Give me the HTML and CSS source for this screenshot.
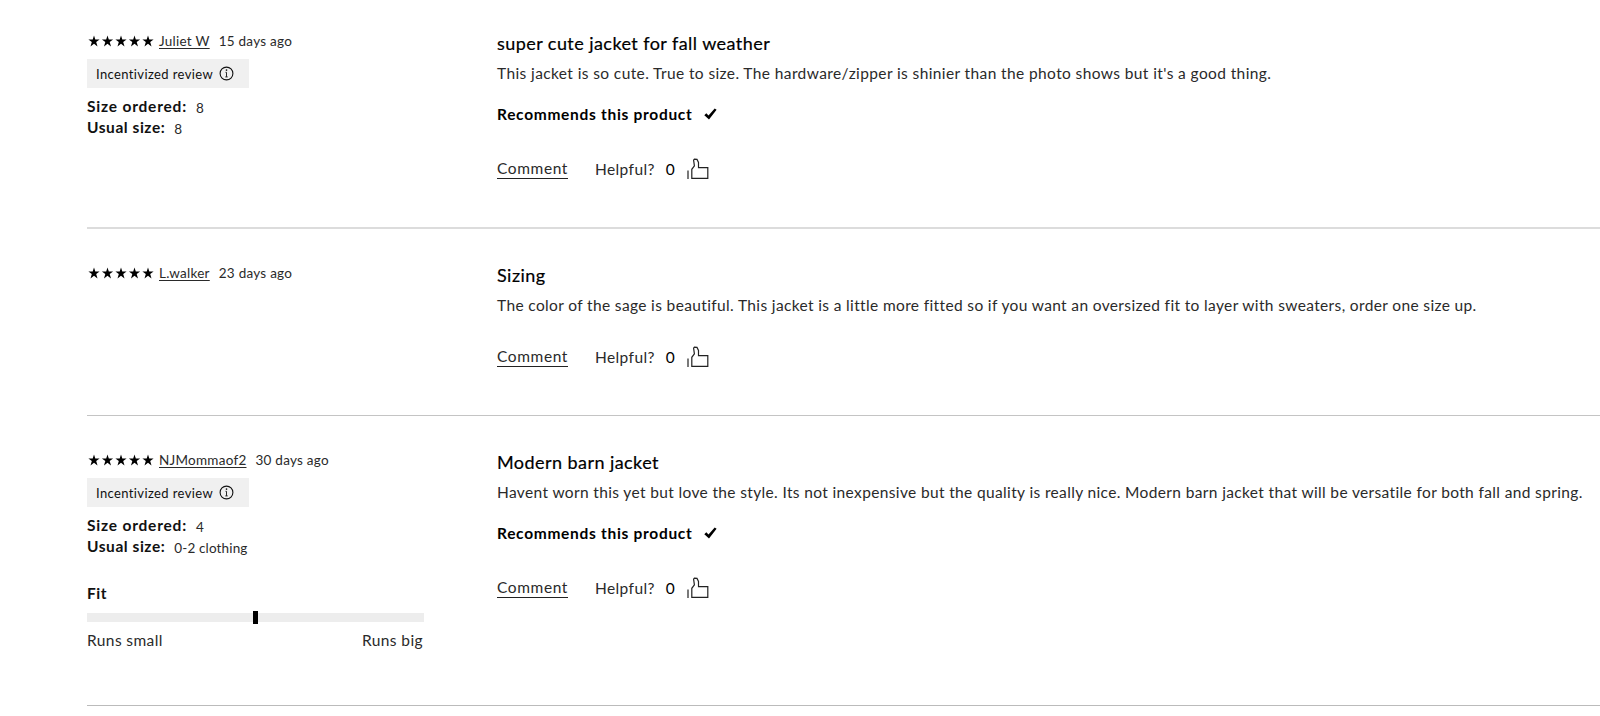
FILE: index.html
```html
<!DOCTYPE html>
<html lang="en">
<head>
  <meta charset="UTF-8">
  <title>Customer Reviews</title>
  <link rel="stylesheet" href="styles.css">
</head>
<body>

<!-- shared icons -->
<svg class="sprite" width="0" height="0">
  <symbol id="stars" viewBox="0 0 66 12">
    <path id="star" d="M6 0.4L7.3 4.5H11.6L8.2 7.1L9.5 11.4L6 8.8L2.5 11.4L3.8 7.1L0.4 4.5H4.7Z"/>
    <use href="#star" x="13.5"/>
    <use href="#star" x="27"/>
    <use href="#star" x="40.5"/>
    <use href="#star" x="54"/>
  </symbol>
  <symbol id="info" viewBox="0 0 15 15">
    <circle cx="7.5" cy="7.5" r="6.4" fill="none" stroke="#111" stroke-width="1.1"/>
    <path d="M6.5 6.3H7.5V10.8M6.3 10.9H8.7" fill="none" stroke="#111" stroke-width="0.9"/>
    <rect x="6.8" y="3.4" width="1.4" height="1.4"/>
  </symbol>
  <symbol id="check" viewBox="0 0 13 12">
    <path d="M0.3 7.2L2.3 5.2L4.5 7.4L10.7 0.4L12.6 1.7L5 11.6Z"/>
  </symbol>
  <symbol id="thumb" viewBox="0 0 22 22">
    <path d="M1 12.5V21M4.8 20.3V11.3L7.4 7.8L6.6 2.2L7.4 1.2L10 1.4L11.5 4.4V9.6H20.8V20.3Z" fill="none" stroke="#222" stroke-width="1.2"/>
  </symbol>
</svg>

<div class="reviews">
  <div class="review">
    <div class="author">
      <div class="byline">
        <svg class="stars"><use href="#stars"/></svg>
        <a class="name">Juliet W</a>
        <span class="date">15 days ago</span>
      </div>
      <div class="tag"><span>Incentivized review</span><svg class="info"><use href="#info"/></svg></div>
      <div class="detail"><b class="ordered">Size ordered:</b><span>8</span></div>
      <div class="detail"><b>Usual size:</b><span>8</span></div>
    </div>
    <div class="content">
      <h3>super cute jacket for fall weather</h3>
      <p>This jacket is so cute. True to size. The hardware/zipper is shinier than the photo shows but it's a good thing.</p>
      <div class="recommend"><b>Recommends this product</b><svg class="check"><use href="#check"/></svg></div>
      <div class="actions">
        <a class="comment">Comment</a>
        <span class="helpful">Helpful?</span>
        <span class="count">0</span>
        <svg class="thumb"><use href="#thumb"/></svg>
      </div>
    </div>
  </div>

  <div class="review short">
    <div class="author">
      <div class="byline">
        <svg class="stars"><use href="#stars"/></svg>
        <a class="name">L.walker</a>
        <span class="date">23 days ago</span>
      </div>
    </div>
    <div class="content">
      <h3>Sizing</h3>
      <p>The color of the sage is beautiful. This jacket is a little more fitted so if you want an oversized fit to layer with sweaters, order one size up.</p>
      <div class="actions">
        <a class="comment">Comment</a>
        <span class="helpful">Helpful?</span>
        <span class="count">0</span>
        <svg class="thumb"><use href="#thumb"/></svg>
      </div>
    </div>
  </div>

  <div class="review tall">
    <div class="author">
      <div class="byline">
        <svg class="stars"><use href="#stars"/></svg>
        <a class="name">NJMommaof2</a>
        <span class="date">30 days ago</span>
      </div>
      <div class="tag"><span>Incentivized review</span><svg class="info"><use href="#info"/></svg></div>
      <div class="detail"><b class="ordered">Size ordered:</b><span>4</span></div>
      <div class="detail"><b>Usual size:</b><span>0-2 clothing</span></div>
      <div class="fit">
        <b>Fit</b>
        <div class="bar"><div class="marker"></div></div>
        <div class="labels"><span>Runs small</span><span>Runs big</span></div>
      </div>
    </div>
    <div class="content">
      <h3>Modern barn jacket</h3>
      <p>Havent worn this yet but love the style. Its not inexpensive but the quality is really nice. Modern barn jacket that will be versatile for both fall and spring.</p>
      <div class="recommend"><b>Recommends this product</b><svg class="check"><use href="#check"/></svg></div>
      <div class="actions">
        <a class="comment">Comment</a>
        <span class="helpful">Helpful?</span>
        <span class="count">0</span>
        <svg class="thumb"><use href="#thumb"/></svg>
      </div>
    </div>
  </div>
</div>

</body>
</html>
```
FILE: styles.css
```css
* {
  box-sizing: border-box;
}
body {
  margin: 0;
  background: #fff;
  color: #2a2a2a;
  font-family: Lato, "Liberation Sans", sans-serif;
  font-size: 15.5px;
  overflow: hidden;
}
.sprite {
  display: block;
}
svg {
  flex: none;
}
.reviews {
  margin-left: 87px;
}
.review {
  display: flex;
  height: 229px;
  padding-top: 29px;
  border-bottom: 2px solid #dcdcdc;
}
.review.short {
  height: 187px;
  padding-top: 32px;
  border-bottom: 1px solid #c4c4c4;
}
.review.tall {
  height: 290px;
  padding-top: 32px;
  border-bottom: 1px solid #bbb;
}
.author {
  width: 337px;
  margin-right: 73px;
}
.byline {
  display: flex;
  align-items: center;
  height: 24px;
  font-size: 13.5px;
  letter-spacing: 0.25px;
}
.stars {
  width: 66px;
  height: 12px;
  margin: 0 4px 0 1px;
}
.name {
  margin: 0 9px 0 1px;
  text-decoration: underline;
  text-decoration-skip-ink: none;
  text-underline-offset: 2px;
  white-space: nowrap;
}
.tag {
  display: flex;
  align-items: center;
  width: 162px;
  height: 29px;
  margin: 6px 0 8px;
  padding-left: 9px;
  background: #f0f0f0;
  color: #111;
  font-size: 13px;
  letter-spacing: 0.38px;
}
.info {
  width: 15px;
  height: 15px;
  margin: -1px 0 0 6px;
}
.detail {
  display: flex;
  height: 20.5px;
  line-height: 20px;
}
.detail span {
  margin: 2px 0 0 9px;
  font-size: 13.5px;
  letter-spacing: 0.15px;
}
b {
  color: #111;
  font-weight: bold;
  letter-spacing: 0.55px;
}
.ordered {
  letter-spacing: 0.8px;
}
.fit {
  margin-top: 27px;
}
.fit b {
  display: block;
  line-height: 20px;
}
.bar {
  height: 9px;
  margin: 10px 0 8px;
  background: #ededed;
}
.marker {
  width: 5px;
  height: 13px;
  margin: 0 auto;
  background: #000;
  transform: translateY(-2px);
}
.labels {
  display: flex;
  justify-content: space-between;
  padding-right: 1px;
  line-height: 20px;
  letter-spacing: 0.4px;
}
.content {
  flex: 1;
  padding-top: 1px;
  white-space: nowrap;
}
h3 {
  margin: 0;
  color: #000;
  font-size: 18px;
  font-weight: normal;
  line-height: 27px;
  letter-spacing: 0.44px;
  -webkit-text-stroke: 0.2px #000;
}
p {
  margin: 4px 0 0;
  padding-top: 1px;
  line-height: 22px;
  letter-spacing: 0.36px;
}
.review:first-child p {
  letter-spacing: 0.39px;
}
.recommend {
  display: flex;
  align-items: center;
  height: 22px;
  margin-top: 19px;
}
.recommend b {
  color: #000;
  letter-spacing: 0.7px;
}
.check {
  width: 13px;
  height: 12px;
  margin-left: 12px;
}
.actions {
  display: flex;
  align-items: center;
  height: 22px;
  margin-top: 33px;
  letter-spacing: 0.5px;
}
.short .actions {
  margin-top: 30px;
}
.comment {
  line-height: 19px;
  border-bottom: 1px solid #222;
  margin-right: 27px;
  letter-spacing: 0.6px;
}
.helpful {
  letter-spacing: 0.4px;
}
.count {
  margin: 0 12px 0 11px;
  color: #000;
}
.thumb {
  width: 22px;
  height: 22px;
}
```
